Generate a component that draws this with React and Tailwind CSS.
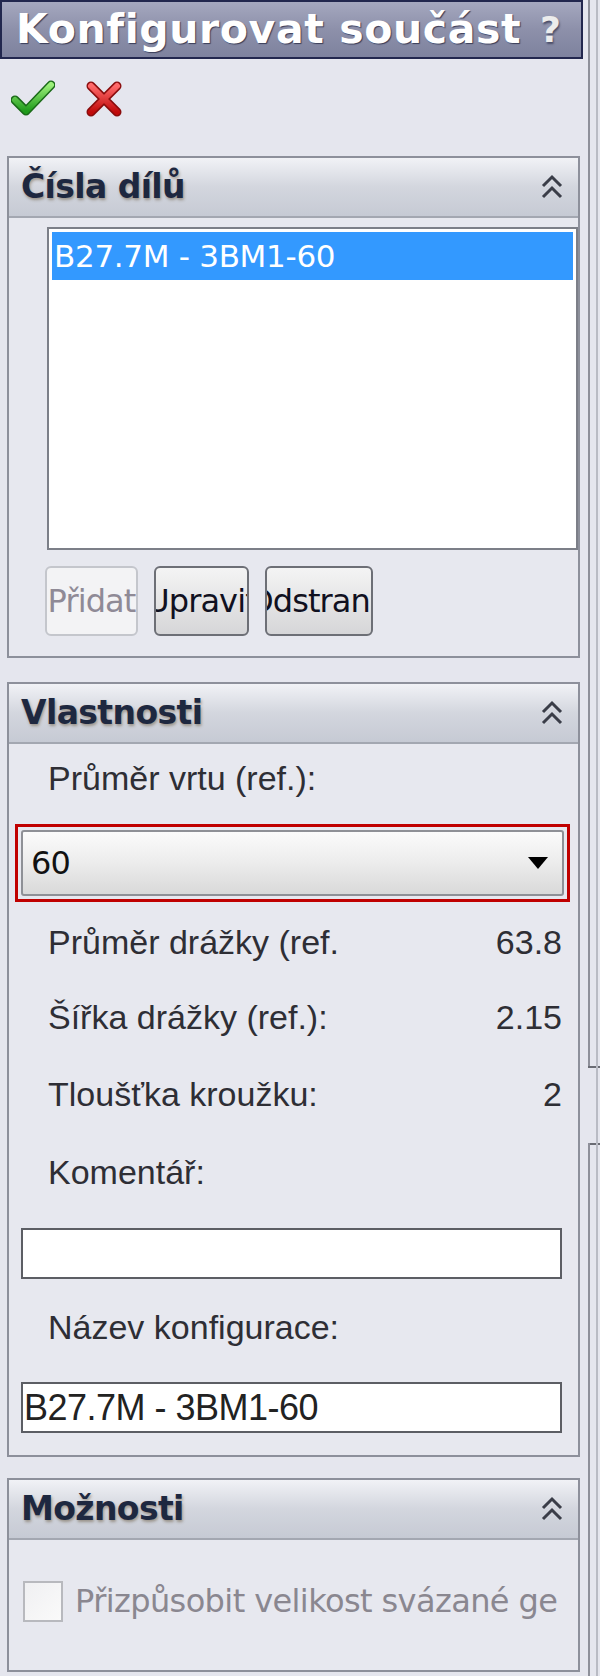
import React from "react";

function Chevrons() {
  return (
    <svg width="24" height="26" viewBox="0 0 24 26" className="block">
      <polyline points="3,12 12,3 21,12" fill="none" stroke="#3a3d48" strokeWidth="3" />
      <polyline points="3,23 12,14 21,23" fill="none" stroke="#3a3d48" strokeWidth="3" />
    </svg>
  );
}

function Section({ title, children, className = "" }) {
  return (
    <div className={"ml-[7px] w-[573px] border-2 border-[#8d909b] bg-[#e7e8ef] " + className}>
      <div className="h-[60px] border-b-2 border-[#a3a7b1] bg-gradient-to-b from-[#f1f2f6] via-[#d3d6de] to-[#c6cad4] flex items-center justify-between pl-[12px] pr-[14px]">
        <span className="font-['DejaVu_Sans',sans-serif] font-bold text-[33px] tracking-[-0.6px] text-[#1e2840] [text-shadow:1px_2px_3px_rgba(90,70,40,0.45)]">
          {title}
        </span>
        <Chevrons />
      </div>
      {children}
    </div>
  );
}

function Label({ children, value, className = "" }) {
  return (
    <div className={"h-[50px] flex items-center justify-between pl-[39px] pr-[16px] text-[34px] text-[#2e2e35] font-['Liberation_Sans',Arial,sans-serif] " + className}>
      <span>{children}</span>
      {value && <span>{value}</span>}
    </div>
  );
}

export default function App() {
  return (
    <div className="relative w-[600px] h-[1676px] bg-[#e5e6ee] overflow-hidden">
      <div className="w-[588px] flex flex-col">
        {/* Title */}
        <div className="h-[59px] w-[583px] border-2 border-[#22274e] bg-gradient-to-b from-[#a5a8bf] via-[#8d90aa] to-[#7e829e] flex items-center justify-between pl-[14px] pr-[20px]">
          <span className="font-['DejaVu_Sans',sans-serif] font-bold text-[41px] tracking-[0.6px] text-white leading-none [text-shadow:1px_1px_1px_#3a3d58]">
            Konfigurovat součást
          </span>
          <span className="font-['DejaVu_Sans',sans-serif] font-bold text-[36px] text-[#ececec] leading-none [text-shadow:1px_2px_2px_#4a4d68]">?</span>
        </div>

        {/* OK / Cancel */}
        <div className="h-[97px] flex items-start pt-[21px] pl-[11px] gap-[30px]">
          <svg width="44" height="38" viewBox="0 0 44 38">
            <defs>
              <linearGradient id="gck" x1="0" y1="0" x2="0" y2="1">
                <stop offset="0" stopColor="#9cf07a" />
                <stop offset="1" stopColor="#1e9a1a" />
              </linearGradient>
            </defs>
            <path d="M4 20 L15 31 L40 5" fill="none" stroke="#1a6a18" strokeWidth="9" strokeLinecap="round" strokeLinejoin="round" />
            <path d="M4 20 L15 31 L40 5" fill="none" stroke="url(#gck)" strokeWidth="6" strokeLinecap="round" strokeLinejoin="round" />
          </svg>
          <svg width="38" height="38" viewBox="0 0 38 38">
            <defs>
              <linearGradient id="gx" x1="0" y1="0" x2="0" y2="1">
                <stop offset="0" stopColor="#ff6a6a" />
                <stop offset="1" stopColor="#c00a0a" />
              </linearGradient>
            </defs>
            <path d="M6 6 L32 32 M32 6 L6 32" fill="none" stroke="#8a0c0c" strokeWidth="9" strokeLinecap="round" />
            <path d="M6 6 L32 32 M32 6 L6 32" fill="none" stroke="url(#gx)" strokeWidth="6" strokeLinecap="round" />
          </svg>
        </div>

        {/* Čísla dílů */}
        <Section title="Čísla dílů">
          <div className="pt-[9px] pl-[38px] pr-[1px] pb-[20px]">
            <div className="h-[323px] w-[531px] border-2 border-[#7c7f88] bg-white p-[3px]">
              <div className="h-[48px] bg-[#3399ff] flex items-center pl-[2px] font-['DejaVu_Sans',sans-serif] text-[31px] tracking-[-0.3px] text-white">
                B27.7M - 3BM1-60
              </div>
            </div>
            <div className="mt-[16px] -ml-[2px] flex gap-[16px] font-['DejaVu_Sans',sans-serif] text-[32px] tracking-[-0.9px]">
              <div className="h-[70px] w-[93px] rounded-[6px] border-2 border-[#c4c6cc] bg-[#f3f3f5] flex items-center justify-center overflow-hidden text-[#8f8a96]">
                <span className="whitespace-nowrap">Přidat</span>
              </div>
              <div className="h-[70px] w-[95px] rounded-[6px] border-2 border-[#6d6f76] bg-gradient-to-b from-[#f4f4f4] to-[#d6d6d8] flex items-center justify-center overflow-hidden text-[#101020]">
                <span className="whitespace-nowrap">Upravit</span>
              </div>
              <div className="h-[70px] w-[108px] rounded-[6px] border-2 border-[#6d6f76] bg-gradient-to-b from-[#f4f4f4] to-[#d6d6d8] flex items-center justify-center overflow-hidden text-[#101020]">
                <span className="whitespace-nowrap">Odstranit</span>
              </div>
            </div>
          </div>
        </Section>

        {/* Vlastnosti */}
        <Section title="Vlastnosti" className="mt-[24px]">
          <div className="pt-[9px] pb-[22px]">
            <Label>Průměr vrtu (ref.):</Label>
            <div className="mt-[21px] ml-[6px] w-[555px] h-[78px] border-[3px] border-[#c00000] p-[3px]">
              <div className="h-full rounded-[3px] border-2 border-[#8e9096] bg-gradient-to-b from-[#fbfbfb] via-[#ececec] to-[#d9d9d9] flex items-center justify-between pl-[8px] pr-[14px]">
                <span className="font-['DejaVu_Sans',sans-serif] text-[32px] tracking-[-0.8px] text-[#111]">60</span>
                <svg width="20" height="12" viewBox="0 0 20 12"><polygon points="0,0 20,0 10,12" fill="#000" /></svg>
              </div>
            </div>
            <Label className="mt-[15px]" value="63.8">Průměr drážky (ref.</Label>
            <Label className="mt-[25px]" value="2.15">Šířka drážky (ref.):</Label>
            <Label className="mt-[27px]" value="2">Tloušťka kroužku:</Label>
            <Label className="mt-[28px]">Komentář:</Label>
            <div className="mt-[31px] ml-[12px] w-[541px] h-[51px] border-2 border-[#5c5e64] bg-white" />
            <Label className="mt-[23px]">Název konfigurace:</Label>
            <div className="mt-[30px] ml-[12px] w-[541px] h-[51px] border-2 border-[#5c5e64] bg-white flex items-center pl-[1px] font-['Liberation_Sans',Arial,sans-serif] text-[36px] tracking-[-0.5px] text-[#222]">
              B27.7M - 3BM1-60
            </div>
          </div>
        </Section>

        {/* Možnosti */}
        <Section title="Možnosti" className="mt-[21px]">
          <div className="pt-[37px] pb-[45px] pl-[14px] flex items-center gap-[12px]">
            <div className="w-[40px] h-[41px] border-2 border-[#b8b9be] bg-gradient-to-br from-[#f0f0f2] to-[#fafafa]" />
            <span className="font-['DejaVu_Sans',sans-serif] text-[32px] tracking-[-0.6px] text-[#8a8790] whitespace-nowrap">
              Přizpůsobit velikost svázané ge
            </span>
          </div>
        </Section>
      </div>

      {/* right splitter edge */}
      <div className="absolute left-[588px] top-0 w-[2px] h-[1068px] bg-[#8e909a]" />
      <div className="absolute left-[588px] top-[1066px] w-[12px] h-[2px] bg-[#6a6c74]" />
      <div className="absolute left-[588px] top-[1143px] w-[12px] h-[2px] bg-[#6a6c74]" />
      <div className="absolute left-[588px] top-[1143px] w-[2px] h-[533px] bg-[#8e909a]" />
      <div className="absolute left-[596px] top-0 w-[2px] h-[1676px] bg-[#b9bbc4]" />
    </div>
  );
}
